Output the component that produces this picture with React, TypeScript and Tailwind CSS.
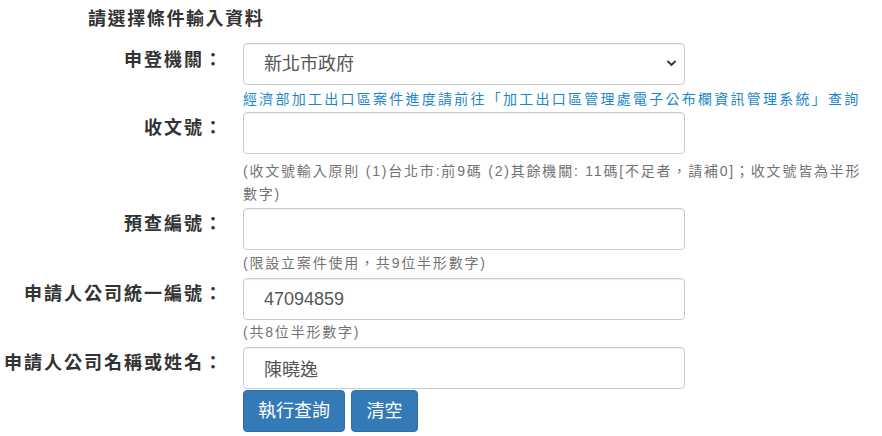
import { useState } from "react"

const FONT = { fontFamily: '"Liberation Sans", "Noto Sans CJK TC", sans-serif' }

function Label({ children, className = "" }: { children: React.ReactNode; className?: string }) {
  return (
    <div className={"w-[224px] shrink-0 text-right text-[18px] font-bold tracking-[2px] leading-[26px] text-[#333] " + className}>
      {children}
    </div>
  )
}

function Help({ children, className = "" }: { children: React.ReactNode; className?: string }) {
  return <div className={"text-[14px] leading-[23px] tracking-[1.8px] text-[#737373] " + className}>{children}</div>
}

const inputCls =
  "block w-[442px] h-[42px] rounded-[4px] border border-[#ccc] bg-white px-[20px] text-[18px] text-[#555] outline-none shadow-[inset_0_1px_1px_rgba(0,0,0,0.075)]"

export default function App() {
  const [agency, setAgency] = useState("新北市政府")
  const [receiptNo, setReceiptNo] = useState("")
  const [preNo, setPreNo] = useState("")
  const [taxId, setTaxId] = useState("47094859")
  const [name, setName] = useState("陳曉逸")

  const clear = () => {
    setReceiptNo("")
    setPreNo("")
    setTaxId("")
    setName("")
  }

  return (
    <div className="w-[882px] h-[436px] bg-white overflow-hidden" style={FONT}>
      <div className="pl-[88px] pt-[6px] text-[18px] font-bold tracking-[1.6px] leading-[26px] text-[#333]">
        請選擇條件輸入資料
      </div>

      <div className="mt-[11px] flex gap-[19px]">
        <Label className="pt-[4px]">申登機關：</Label>
        <div>
          <div className="relative w-[442px]">
            <select
              value={agency}
              onChange={(e) => setAgency(e.target.value)}
              className={inputCls + " appearance-none pr-[36px]"}
            >
              <option>新北市政府</option>
              <option>臺北市政府</option>
              <option>經濟部商業司</option>
            </select>
            <svg
              className="pointer-events-none absolute right-[8px] top-[16px]"
              width="11"
              height="8"
              viewBox="0 0 11 8"
            >
              <path d="M1.5 2 L5.5 6 L9.5 2" fill="none" stroke="#333" strokeWidth="1.8" />
            </svg>
          </div>
          <a href="#" className="block mt-[4px] text-[14px] leading-[20px] tracking-[2.25px] text-[#1a88c9] whitespace-nowrap">
            經濟部加工出口區案件進度請前往「加工出口區管理處電子公布欄資訊管理系統」查詢
          </a>
        </div>
      </div>

      <div className="mt-[3px] flex gap-[19px]">
        <Label className="pt-[3px]">收文號：</Label>
        <div>
          <input className={inputCls} value={receiptNo} onChange={(e) => setReceiptNo(e.target.value)} />
          <Help className="mt-[6px] mb-[-1px] w-[630px]">
            (收文號輸入原則 (1)台北市:前9碼 (2)其餘機關: 11碼[不足者，請補0]；收文號皆為半形數字)
          </Help>
        </div>
      </div>

      <div className="mt-[3px] flex gap-[19px]">
        <Label className="pt-[3px]">預查編號：</Label>
        <div>
          <input className={inputCls} value={preNo} onChange={(e) => setPreNo(e.target.value)} />
          <Help className="mt-[2px]">(限設立案件使用，共9位半形數字)</Help>
        </div>
      </div>

      <div className="mt-[3px] flex gap-[19px]">
        <Label className="pt-[3px]">申請人公司統一編號：</Label>
        <div>
          <input className={inputCls} value={taxId} onChange={(e) => setTaxId(e.target.value)} />
          <Help className="mt-[1px]">(共8位半形數字)</Help>
        </div>
      </div>

      <div className="mt-[3px] flex gap-[19px]">
        <Label className="pt-[3px]">申請人公司名稱或姓名：</Label>
        <div>
          <input className={inputCls} value={name} onChange={(e) => setName(e.target.value)} />
          <div className="mt-[1px] flex gap-[6px]">
            <button className="h-[42px] w-[102px] rounded-[4px] border border-[#2e6da4] bg-[#337ab7] text-[18px] text-white">
              執行查詢
            </button>
            <button onClick={clear} className="h-[42px] w-[67px] rounded-[4px] border border-[#2e6da4] bg-[#337ab7] text-[18px] text-white">
              清空
            </button>
          </div>
        </div>
      </div>
    </div>
  )
}
